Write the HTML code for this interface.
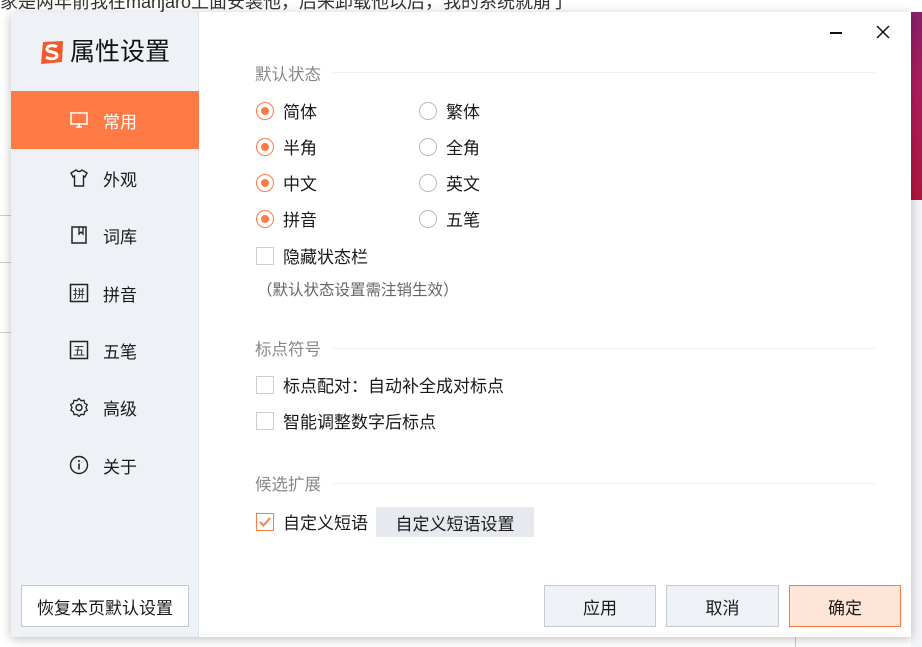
<!DOCTYPE html>
<html><head><meta charset="utf-8"><style>
*{margin:0;padding:0;box-sizing:border-box}
body{width:922px;height:647px;overflow:hidden;background:#fff;position:relative;font-family:"Liberation Sans","Noto Sans CJK SC",sans-serif;color:#1a1a1a}
.abs{position:absolute}
.dlg{left:11px;top:12px;width:900px;height:625px;background:#fff;box-shadow:0 2px 10px rgba(0,0,0,.25)}
.side{left:0;top:0;width:188px;height:625px;background:#eef1f6;border-right:1px solid #dde1e8}
.nav{left:0;width:188px;height:58px;font-size:17px;display:flex;align-items:center}
.nav svg{position:absolute;left:58px}
.nav span{position:absolute;left:92px}
.sec{font-size:16.5px;color:#888}
.line{height:1px;background:#eef0f3}
.radio{width:18px;height:18px;border-radius:50%;border:1px solid #bbb}
.radio.on{border:1.5px solid #ff7a45}
.radio.on::after{content:"";position:absolute;left:3.5px;top:3.5px;width:8px;height:8px;border-radius:50%;background:#ff7a45}
.lbl{font-size:17px}
.cb{width:18px;height:18px;border:1px solid #c9cdd4;background:#fff}
.btn{height:42px;border:1px solid #c3c9d3;background:#eef1f6;font-size:17px;display:flex;align-items:center;justify-content:center}
</style></head><body>
<div class="abs" style="left:0;top:-12px;font-size:18px;color:#333;white-space:nowrap">家是两年前我在manjaro上面安装他，后来卸载他以后，我的系统就崩了</div>
<div class="abs" style="left:0;top:215px;width:11px;height:1px;background:#ccc"></div>
<div class="abs" style="left:0;top:262px;width:11px;height:1px;background:#ccc"></div>
<div class="abs" style="left:0;top:332px;width:11px;height:1px;background:#ccc"></div>
<div class="abs" style="left:911px;top:12px;width:11px;height:188px;background:linear-gradient(180deg,#8a1f6a,#b01c5c 40%,#b0173e)"></div>
<div class="abs" style="left:911px;top:200px;width:11px;height:447px;background:#f4f5f7"></div>
<div class="abs" style="left:795px;top:637px;width:1px;height:10px;background:#ccc"></div>
<div class="abs dlg">
 <div class="abs side">
  <svg class="abs" style="left:28px;top:28px" width="26" height="25" viewBox="0 0 26 25"><path d="M4 2 L24 1 L23 22 L2 24 Z" fill="#f4592b"/><path d="M18 7 C15 5 8 5 8 9 C8 13 18 11 18 15.5 C18 19.5 10 19.5 7 17" stroke="#fff" stroke-width="3" fill="none"/></svg>
  <div class="abs" style="left:59px;top:20px;font-size:25px;color:#111">属性设置</div>
  <div class="abs nav" style="top:79px;background:#ff7a45;color:#fff"><svg width="20" height="20" viewBox="0 0 20 20"><rect x="2" y="3" width="16" height="11" fill="none" stroke="#fff" stroke-width="1.5"/><path d="M10 14v3M7 17h6" stroke="#fff" stroke-width="1.5"/></svg><span>常用</span></div>
  <div class="abs nav" style="top:137px"><svg width="20" height="20" viewBox="0 0 20 20"><path d="M7 2 L2 5 L4 9 L5.5 8 V18 H14.5 V8 L16 9 L18 5 L13 2 Q10 5 7 2Z" fill="none" stroke="#222" stroke-width="1.4"/></svg><span>外观</span></div>
  <div class="abs nav" style="top:194px"><svg width="20" height="20" viewBox="0 0 20 20"><path d="M3 2h14v16H3zM3 2v16" fill="none" stroke="#222" stroke-width="1.5"/><path d="M10 2v7l2-2 2 2V2" fill="none" stroke="#222" stroke-width="1.3"/></svg><span>词库</span></div>
  <div class="abs nav" style="top:252px"><svg width="20" height="20" viewBox="0 0 20 20"><rect x="1.5" y="1.5" width="17" height="17" fill="none" stroke="#222" stroke-width="1.5"/><text x="10" y="15" font-size="12" text-anchor="middle" fill="#222" font-family="Noto Sans CJK SC">拼</text></svg><span>拼音</span></div>
  <div class="abs nav" style="top:309px"><svg width="20" height="20" viewBox="0 0 20 20"><rect x="1.5" y="1.5" width="17" height="17" fill="none" stroke="#222" stroke-width="1.5"/><text x="10" y="15" font-size="12" text-anchor="middle" fill="#222" font-family="Noto Sans CJK SC">五</text></svg><span>五笔</span></div>
  <div class="abs nav" style="top:366px"><svg width="20" height="20" viewBox="0 0 20 20"><path d="M10 1.5l2 2.2 3-.4.6 2.9 2.6 1.6-1.3 2.7 1.3 2.7-2.6 1.6-.6 2.9-3-.4-2 2.2-2-2.2-3 .4-.6-2.9-2.6-1.6L3 10.5 1.7 7.8l2.6-1.6.6-2.9 3 .4z" fill="none" stroke="#222" stroke-width="1.3"/><circle cx="10" cy="10.5" r="3" fill="none" stroke="#222" stroke-width="1.4"/></svg><span>高级</span></div>
  <div class="abs nav" style="top:424px"><svg width="20" height="20" viewBox="0 0 20 20"><circle cx="10" cy="10" r="8.5" fill="none" stroke="#222" stroke-width="1.4"/><path d="M10 8.5v6" stroke="#222" stroke-width="1.6"/><circle cx="10" cy="6" r="1" fill="#222"/></svg><span>关于</span></div>
  <div class="abs btn" style="left:10px;top:573px;width:168px;height:42px;background:#fff">恢复本页默认设置</div>
 </div>
 <div class="abs" style="left:819px;top:20px;width:12px;height:1.5px;background:#111"></div>
 <svg class="abs" style="left:865px;top:13px" width="14" height="14" viewBox="0 0 14 14"><path d="M1 1L13 13M13 1L1 13" stroke="#111" stroke-width="1.5"/></svg>

 <div class="abs sec" style="left:244px;top:49px">默认状态</div><div class="abs line" style="left:322px;top:60px;width:542px"></div>
 <div class="abs radio on" style="left:245px;top:90px"></div><div class="abs lbl" style="left:272px;top:86px">简体</div>
 <div class="abs radio" style="left:408px;top:90px"></div><div class="abs lbl" style="left:435px;top:86px">繁体</div>
 <div class="abs radio on" style="left:245px;top:126px"></div><div class="abs lbl" style="left:272px;top:122px">半角</div>
 <div class="abs radio" style="left:408px;top:126px"></div><div class="abs lbl" style="left:435px;top:122px">全角</div>
 <div class="abs radio on" style="left:245px;top:162px"></div><div class="abs lbl" style="left:272px;top:158px">中文</div>
 <div class="abs radio" style="left:408px;top:162px"></div><div class="abs lbl" style="left:435px;top:158px">英文</div>
 <div class="abs radio on" style="left:245px;top:198px"></div><div class="abs lbl" style="left:272px;top:194px">拼音</div>
 <div class="abs radio" style="left:408px;top:198px"></div><div class="abs lbl" style="left:435px;top:194px">五笔</div>
 <div class="abs cb" style="left:245px;top:235px"></div><div class="abs lbl" style="left:272px;top:231px">隐藏状态栏</div>
 <div class="abs" style="left:246px;top:266px;font-size:15.5px;color:#666">（默认状态设置需注销生效）</div>

 <div class="abs sec" style="left:244px;top:324px">标点符号</div><div class="abs line" style="left:322px;top:336px;width:542px"></div>
 <div class="abs cb" style="left:245px;top:364px"></div><div class="abs lbl" style="left:272px;top:360px">标点配对：自动补全成对标点</div>
 <div class="abs cb" style="left:245px;top:400px"></div><div class="abs lbl" style="left:272px;top:396px">智能调整数字后标点</div>

 <div class="abs sec" style="left:244px;top:459px">候选扩展</div><div class="abs line" style="left:322px;top:471px;width:542px"></div>
 <div class="abs cb" style="left:245px;top:501px;border-color:#ff7a45"><svg width="16" height="16" viewBox="0 0 16 16" style="position:absolute;left:0;top:0"><path d="M3 8l3.5 3.5L13 4" stroke="#ff7a45" stroke-width="2" fill="none"/></svg></div>
 <div class="abs lbl" style="left:272px;top:497px">自定义短语</div>
 <div class="abs" style="left:365px;top:495px;width:158px;height:30px;background:#e6e9ee;font-size:17px;display:flex;align-items:center;justify-content:center">自定义短语设置</div>

 <div class="abs btn" style="left:533px;top:573px;width:112px">应用</div>
 <div class="abs btn" style="left:655px;top:573px;width:113px">取消</div>
 <div class="abs btn" style="left:778px;top:573px;width:112px;background:#ffe4d8;border-color:#ff7a45">确定</div>
</div>
</body></html>
